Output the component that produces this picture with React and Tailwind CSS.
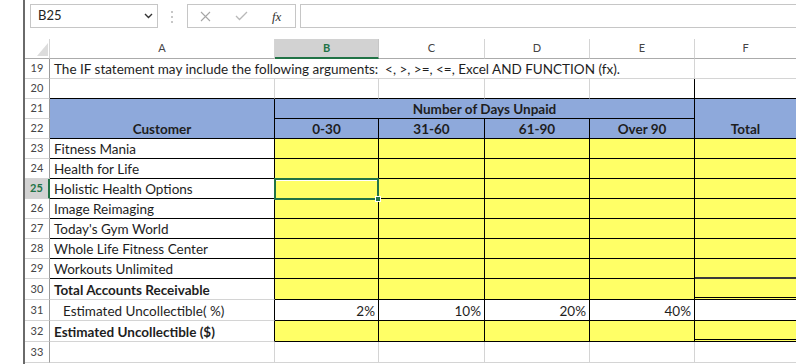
import React from 'react';

const FONT = "font-['Lato','Open_Sans',sans-serif]";

function Cell({ className = '', children }) {
  return (
    <div className={`box-border border-r border-b flex items-end whitespace-nowrap text-[13.5px] leading-[18px] text-[#1e1e1e] ${className}`}>
      {children}
    </div>
  );
}

function RowHead({ n, className = '', active = false }) {
  if (active) {
    return (
      <div className="box-border border-b border-b-[#d4d4d4] border-r-2 border-r-[#217346] bg-[#d2d2d2] flex items-center justify-center text-[11px] font-bold text-[#217346]">
        {n}
      </div>
    );
  }
  return (
    <div className={`box-border border-b border-b-[#d4d4d4] border-r border-r-[#9b9b9b] flex items-center justify-center text-[11px] text-[#444] ${className}`}>
      {n}
    </div>
  );
}

const customers = [
  'Fitness Mania',
  'Health for Life',
  'Holistic Health Options',
  'Image Reimaging',
  "Today's Gym World",
  'Whole Life Fitness Center',
  'Workouts Unlimited',
];

export default function App() {
  return (
    <div className={`w-[796px] h-[364px] bg-white flex overflow-hidden ${FONT}`}>
      <div className="w-[23px] shrink-0" />
      <div className="w-[2px] shrink-0 bg-[#6a6a6a]" />
      <div className="flex-1 flex flex-col min-w-0">
        {/* toolbar */}
        <div className="h-[39px] shrink-0 flex items-start pt-[4px]">
          <div className="ml-[5px] w-[128px] h-[24px] box-border border border-[#c6c6c6] flex items-center pl-[7px] pr-[4px]">
            <span className="text-[13px] text-[#222] font-['Lato',sans-serif]">B25</span>
            <svg className="ml-auto" width="9" height="6" viewBox="0 0 9 6">
              <path d="M1 1 L4.5 4.5 L8 1" fill="none" stroke="#333" strokeWidth="1.4" />
            </svg>
          </div>
          <svg className="ml-[12px] mt-[6px]" width="4" height="14" viewBox="0 0 4 14">
            <circle cx="2" cy="2" r="1" fill="#b5b5b5" />
            <circle cx="2" cy="7" r="1" fill="#b5b5b5" />
            <circle cx="2" cy="12" r="1" fill="#b5b5b5" />
          </svg>
          <div className="ml-[13px] w-[109px] h-[24px] box-border border border-[#c6c6c6] flex items-center">
            <svg className="ml-[12px]" width="11" height="11" viewBox="0 0 11 11">
              <path d="M1 1 L10 10 M10 1 L1 10" stroke="#a6a6a6" strokeWidth="1.1" />
            </svg>
            <svg className="ml-[24px]" width="13" height="10" viewBox="0 0 13 10">
              <path d="M1 5 L4.5 8.5 L12 1" fill="none" stroke="#b8b8b8" strokeWidth="1.3" />
            </svg>
            <span className="ml-[24px] text-[13px] italic font-['Liberation_Serif',serif] text-[#333] leading-none">fx</span>
          </div>
          <div className="ml-[4px] flex-1 -mr-[4px] h-[24px] box-border border border-[#c6c6c6]" />
        </div>

        {/* grid */}
        <div className="grid grid-cols-[25px_225px_104px_106px_105px_105px_101px] grid-rows-[repeat(12,20px)_repeat(4,21px)]">
          {/* column header row */}
          <div className="box-border border-b border-b-[#ababab] border-r border-r-[#d4d4d4] relative">
            <svg className="absolute left-[12px] top-[4px]" width="11" height="13" viewBox="0 0 11 13">
              <path d="M11 0 L11 13 L0 13 Z" fill="#dcdcdc" />
            </svg>
          </div>
          <div className="box-border border-b border-b-[#ababab] border-r border-r-[#d4d4d4] flex items-center justify-center text-[11px] text-[#444]">A</div>
          <div className="box-border border-b-2 border-b-[#217346] border-r border-r-[#c6c6c6] bg-[#d2d2d2] flex items-center justify-center text-[11px] font-bold text-[#217346]">B</div>
          <div className="box-border border-b border-b-[#ababab] border-r border-r-[#d4d4d4] flex items-center justify-center text-[11px] text-[#444]">C</div>
          <div className="box-border border-b border-b-[#ababab] border-r border-r-[#d4d4d4] flex items-center justify-center text-[11px] text-[#444]">D</div>
          <div className="box-border border-b border-b-[#ababab] border-r border-r-[#d4d4d4] flex items-center justify-center text-[11px] text-[#444]">E</div>
          <div className="box-border border-b border-b-[#ababab] flex items-center justify-center text-[11px] text-[#444]">F</div>

          {/* row 19 */}
          <RowHead n={19} />
          <Cell className="col-span-5 border-r-[#d4d4d4] border-b-[#d4d4d4] pl-[4px]">
            The IF statement may include the following arguments:&nbsp; &lt;, &gt;, &gt;=, &lt;=, Excel AND FUNCTION (fx).
          </Cell>
          <Cell className="border-r-0 border-b-[#d4d4d4]" />

          {/* row 20 */}
          <RowHead n={20} />
          <Cell className="border-r-[#d4d4d4] border-b-black" />
          <Cell className="border-r-[#d4d4d4] border-b-black" />
          <Cell className="border-r-[#d4d4d4] border-b-black" />
          <Cell className="border-r-[#d4d4d4] border-b-black" />
          <Cell className="border-r-black border-b-black" />
          <Cell className="border-r-0 border-b-black" />

          {/* rows 21-22 */}
          <RowHead n={21} />
          <Cell className="row-span-2 bg-[#8ea9db] border-r-black border-b-black justify-center font-bold">Customer</Cell>
          <Cell className="col-span-4 bg-[#8ea9db] border-r-black border-b-black justify-center font-bold">Number of Days Unpaid</Cell>
          <Cell className="row-span-2 bg-[#8ea9db] border-r-0 border-b-black justify-center font-bold">Total</Cell>
          <RowHead n={22} />
          <Cell className="bg-[#8ea9db] border-r-black border-b-black justify-center font-bold">0-30</Cell>
          <Cell className="bg-[#8ea9db] border-r-black border-b-black justify-center font-bold">31-60</Cell>
          <Cell className="bg-[#8ea9db] border-r-black border-b-black justify-center font-bold">61-90</Cell>
          <Cell className="bg-[#8ea9db] border-r-black border-b-black justify-center font-bold">Over 90</Cell>

          {customers.map((name, i) => {
            const n = 23 + i;
            const last = n === 29;
            return (
              <React.Fragment key={n}>
                <RowHead n={n} active={n === 25} />
                <Cell className="border-r-black border-b-black pl-[4px]">{name}</Cell>
                <Cell className="relative bg-[#ffff66] border-r-black border-b-black">
                  {n === 25 && (
                    <>
                      <div className="absolute -left-[1px] -top-[1px] -right-[1px] -bottom-[2px] border-2 border-[#217346] z-10">
                        <div className="absolute inset-0 border-t border-white" />
                      </div>
                      <div className="absolute -right-[3px] -bottom-[4px] w-[6px] h-[6px] bg-[#217346] border border-white z-20" />
                    </>
                  )}
                </Cell>
                <Cell className="bg-[#ffff66] border-r-black border-b-black" />
                <Cell className="bg-[#ffff66] border-r-black border-b-black" />
                <Cell className="bg-[#ffff66] border-r-black border-b-black" />
                <Cell className={last ? 'bg-[#ffff66] border-r-0 border-b-2 border-b-[#3a3a3a]' : 'bg-[#ffff66] border-r-0 border-b-black'} />
              </React.Fragment>
            );
          })}

          {/* row 30 */}
          <RowHead n={30} />
          <Cell className="border-r-black border-b-[#d4d4d4] pl-[4px] font-bold">Total Accounts Receivable</Cell>
          <Cell className="bg-[#ffff66] border-r-black border-b-black" />
          <Cell className="bg-[#ffff66] border-r-black border-b-black" />
          <Cell className="bg-[#ffff66] border-r-black border-b-black" />
          <Cell className="bg-[#ffff66] border-r-black border-b-black" />
          <Cell className="bg-[#ffff66] border-r-0 border-b-[3px] border-double border-b-black" />

          {/* row 31 */}
          <RowHead n={31} />
          <Cell className="border-r-black border-b-[#d4d4d4] pl-[13px]">Estimated Uncollectible( %)</Cell>
          <Cell className="border-r-black border-b-black justify-end pr-[3px]">2%</Cell>
          <Cell className="border-r-black border-b-black justify-end pr-[3px]">10%</Cell>
          <Cell className="border-r-black border-b-black justify-end pr-[3px]">20%</Cell>
          <Cell className="border-r-black border-b-black justify-end pr-[3px]">40%</Cell>
          <Cell className="border-r-0 border-b-black" />

          {/* row 32 */}
          <RowHead n={32} />
          <Cell className="border-r-black border-b-[#d4d4d4] pl-[4px] font-bold">Estimated Uncollectible ($)</Cell>
          <Cell className="bg-[#ffff66] border-r-black border-b-black" />
          <Cell className="bg-[#ffff66] border-r-black border-b-black" />
          <Cell className="bg-[#ffff66] border-r-black border-b-black" />
          <Cell className="bg-[#ffff66] border-r-black border-b-black" />
          <Cell className="bg-[#ffff66] border-r-0 border-b-[3px] border-double border-b-black" />

          {/* row 33 */}
          <RowHead n={33} />
          <Cell className="border-r-[#d4d4d4] border-b-[#d4d4d4]" />
          <Cell className="border-r-[#d4d4d4] border-b-[#d4d4d4]" />
          <Cell className="border-r-[#d4d4d4] border-b-[#d4d4d4]" />
          <Cell className="border-r-[#d4d4d4] border-b-[#d4d4d4]" />
          <Cell className="border-r-[#d4d4d4] border-b-[#d4d4d4]" />
          <Cell className="border-r-0 border-b-[#d4d4d4]" />
        </div>
      </div>
    </div>
  );
}
